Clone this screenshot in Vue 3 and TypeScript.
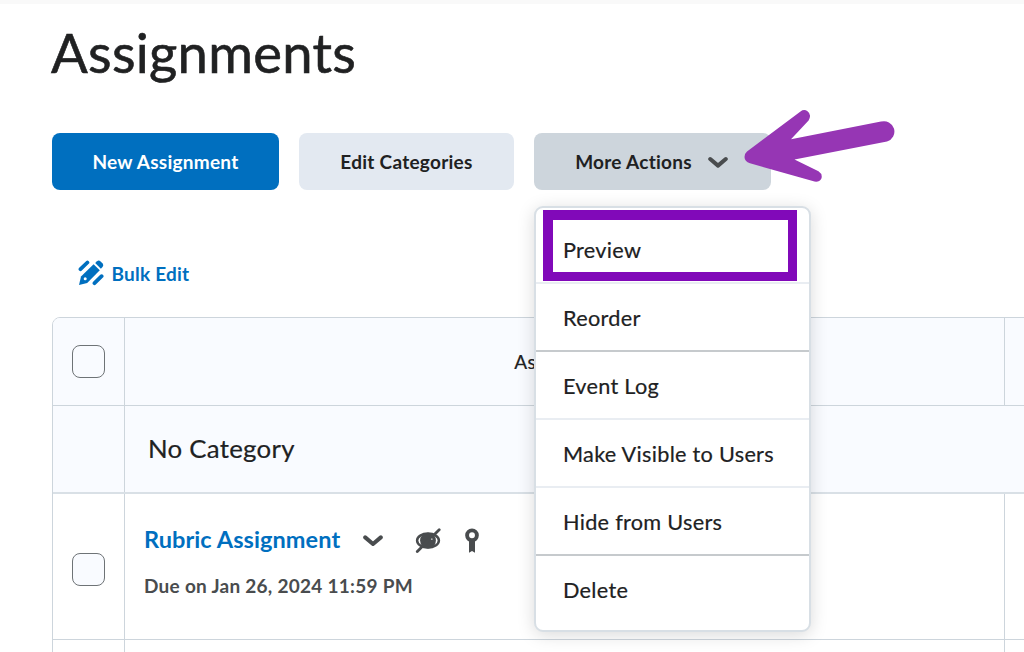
<script setup lang="ts">
interface MenuItem {
  label: string
  strong?: boolean
  highlighted?: boolean
}

const menuItems: MenuItem[] = [
  { label: 'Preview', highlighted: true },
  { label: 'Reorder', strong: true },
  { label: 'Event Log' },
  { label: 'Make Visible to Users' },
  { label: 'Hide from Users', strong: true },
  { label: 'Delete' },
]
</script>

<template>
  <main class="page">
    <div class="topline"></div>
    <h1 class="title">Assignments</h1>

    <div class="actions">
      <button class="btn primary">New Assignment</button>
      <button class="btn subtle">Edit Categories</button>
      <div class="dropdown">
        <button class="btn open">
          <span>More Actions</span>
          <svg class="chevron" viewBox="0 0 20 12" width="20" height="12">
            <path d="M2.2 3 L10 9.6 L17.8 3" />
          </svg>
        </button>
        <ul class="menu">
          <li
            v-for="item in menuItems"
            :key="item.label"
            class="item"
            :class="{ strong: item.strong, highlighted: item.highlighted }"
          >
            {{ item.label }}
          </li>
        </ul>
        <svg class="arrow" viewBox="0 0 160 80" width="160" height="80">
          <path
            d="M7 46.5 L60.5 6.5 Q64 3.8 67.5 6.2 Q72 9.5 68.6 15.5 L51 34.3 L141 16.600 A10.3 10.3 0 0 1 147 36.500 L54.5 54.6 L78.5 66.2 Q82.8 69 81.4 73.5 Q79.2 77.5 74.5 76.6 L10 58.3 Q4.5 56.5 4.5 52 Q4.5 48.5 7 46.5 Z"
          />
        </svg>
      </div>
    </div>

    <a class="bulk">
      <svg viewBox="0 0 26 26" width="26" height="26">
        <path class="fill" d="M1 25 L3 16.6 L15.6 4.2 L21.8 10.3 L9.2 22.9 Z" />
        <path class="fill" d="M17.2 3 L19 1.2 Q20.8 -0.2 22.6 1.5 L24.4 3.3 Q26 5.1 24.5 6.9 L22.9 8.7 Z" />
        <path class="stroke" d="M2.5 9.2 L9.4 2.5 M16.5 23.2 L23.6 16.2" />
        <circle cx="7.2" cy="18.8" r="1.5" fill="#fff" />
      </svg>
      <span>Bulk Edit</span>
    </a>

    <div class="table">
      <div class="row head">
        <div class="cell check"><span class="box"></span></div>
        <div class="cell main centered">Assignment</div>
        <div class="cell rest"></div>
      </div>
      <div class="row category">
        <div class="cell check"></div>
        <div class="cell name">No Category</div>
      </div>
      <div class="row entry">
        <div class="cell check"><span class="box"></span></div>
        <div class="cell main details">
          <div class="heading">
            <a class="link">Rubric Assignment</a>
            <svg class="chevron" viewBox="0 0 20 12" width="20" height="12">
              <path d="M2.2 2.4 L10 9 L17.8 2.4" />
            </svg>
            <svg class="hidden-icon" viewBox="0 0 26 26" width="26" height="26">
              <ellipse cx="13" cy="13.6" rx="10.9" ry="7" fill="none" stroke="#494c4e" stroke-width="2.5" />
              <circle cx="13" cy="13.6" r="7.9" fill="#494c4e" />
              <path d="M2.3 24.4 L24.2 2.8" stroke="#494c4e" stroke-width="2.8" stroke-linecap="round" />
              <circle cx="16.8" cy="12.2" r="0.9" fill="#b4b5b6" />
            </svg>
            <svg class="award-icon" viewBox="0 0 16 26" width="16" height="26">
              <circle cx="8" cy="8.3" r="4.9" fill="none" stroke="#494c4e" stroke-width="3.9" />
              <path d="M5 12 H11 V25.8 L8 24 L5 25.8 Z" fill="#494c4e" />
            </svg>
          </div>
          <div class="due">Due on Jan 26, 2024 11:59 PM</div>
        </div>
        <div class="cell rest"></div>
      </div>
      <div class="row stub">
        <div class="cell check"></div>
        <div class="cell main"></div>
        <div class="cell rest"></div>
      </div>
    </div>
  </main>
</template>

<style>
body {
  margin: 0;
  overflow: hidden;
}
</style>

<style scoped>
.page {
  width: 1024px;
  height: 652px;
  overflow: hidden;
  background: #fff;
  color: #202122;
  font-family: Lato, 'Liberation Sans', sans-serif;
  box-sizing: border-box;
}
.topline {
  height: 4px;
  background: #f9f9f9;
}
.title {
  margin: 13px 0 0 51px;
  height: 70px;
  line-height: 70px;
  font-size: 54.4px;
  font-weight: 400;
  letter-spacing: 0.27px;
  -webkit-text-stroke: 0.6px #202122;
}
.actions {
  display: flex;
  gap: 20px;
  margin: 46px 0 0 52px;
}
.btn {
  display: flex;
  align-items: center;
  justify-content: center;
  height: 57px;
  padding: 0;
  border: 0;
  border-radius: 8px;
  font: 700 19px Lato, 'Liberation Sans', sans-serif;
  letter-spacing: 0.27px;
  color: #202122;
  white-space: nowrap;
}
.primary {
  width: 227px;
  background: #006fbf;
  color: #fff;
}
.subtle {
  width: 215px;
  background: #e3e9f1;
}
.open {
  width: 237px;
  gap: 16px;
  padding-right: 2px;
  background: #cdd5dc;
}
.chevron path {
  fill: none;
  stroke: #494c4e;
  stroke-width: 4;
  stroke-linecap: round;
  stroke-linejoin: round;
}
.dropdown {
  position: relative;
}
.menu {
  position: absolute;
  z-index: 2;
  left: 0;
  top: 73px;
  width: 277px;
  height: 426px;
  box-sizing: border-box;
  margin: 0;
  padding: 8px 0;
  list-style: none;
  background: #fff;
  border: 2px solid #d8dfe5;
  border-radius: 9px;
  box-shadow: 0 3px 17px rgba(0, 0, 0, 0.15);
}
.item {
  position: relative;
  height: 68px;
  box-sizing: border-box;
  padding-left: 27px;
  line-height: 69px;
  font-size: 21.7px;
  letter-spacing: 0.28px;
  -webkit-text-stroke: 0.2px #202122;
  white-space: nowrap;
  border-bottom: 2px solid #e9edf2;
}
.item.strong {
  border-bottom-color: #c6cacd;
}
.item:last-child {
  border-bottom: 0;
}
.item.highlighted::after {
  content: '';
  position: absolute;
  left: 7px;
  top: -6px;
  width: 254px;
  height: 71px;
  box-sizing: border-box;
  border: 10px solid #8109b9;
  border-right-width: 9px;
  border-bottom-width: 9px;
}
.arrow {
  position: absolute;
  z-index: 3;
  left: 206px;
  top: -28px;
  fill: #9636b4;
}
.bulk {
  display: flex;
  align-items: center;
  gap: 8px;
  height: 28px;
  margin: 69px 0 0 78px;
  color: #006fbf;
  font-size: 19px;
  font-weight: 700;
  letter-spacing: 0.22px;
}
.bulk span {
  margin: 0 0 0 -0.5px;
}
.bulk .fill {
  fill: #006fbf;
}
.bulk .stroke {
  stroke: #006fbf;
  stroke-width: 3.8;
  stroke-linecap: round;
}
.table {
  width: 1100px;
  margin: 30px 0 0 52px;
  border: 1px solid #cdd5dc;
  border-radius: 8px 0 0 0;
  overflow: hidden;
}
.row {
  display: flex;
  box-sizing: border-box;
  border-bottom: 1px solid #cdd5dc;
}
.head {
  height: 88px;
  background: #f9fbff;
}
.category {
  height: 88px;
  background: #f9fbff;
  border-bottom: 2px solid #d9e0e6;
}
.entry {
  height: 146px;
}
.stub {
  height: 60px;
}
.cell {
  box-sizing: border-box;
  display: flex;
  align-items: center;
}
.check {
  width: 72px;
  justify-content: center;
  border-right: 1px solid #cdd5dc;
}
.entry .check {
  padding-top: 5px;
}
.main {
  width: 880px;
  border-right: 1px solid #cdd5dc;
}
.centered {
  justify-content: center;
  font-size: 19px;
  letter-spacing: 0.3px;
  padding-bottom: 1px;
  -webkit-text-stroke: 0.2px #202122;
}
.rest {
  flex: 1;
}
.name {
  padding: 0 0 2px 23px;
  font-size: 25.8px;
  letter-spacing: 0.27px;
  -webkit-text-stroke: 0.2px #202122;
}
.box {
  width: 33px;
  height: 33px;
  box-sizing: border-box;
  border: 1.4px solid #6e7376;
  border-radius: 8px;
  background: #f9fbff;
}
.details {
  flex-direction: column;
  align-items: flex-start;
  padding: 30px 0 0 19px;
}
.heading {
  display: flex;
  align-items: center;
  height: 32px;
}
.link {
  width: 219px;
  margin-top: -3px;
  color: #006fbf;
  font-size: 23.5px;
  font-weight: 700;
  letter-spacing: 0.08px;
  white-space: nowrap;
}
.heading .chevron {
  margin-top: 1px;
}
.hidden-icon {
  margin-left: 32px;
}
.award-icon {
  margin-left: 23px;
}
.due {
  margin-top: 16px;
  line-height: 28px;
  color: #494c4e;
  font-size: 19px;
  font-weight: 700;
  letter-spacing: 0.27px;
}
</style>
